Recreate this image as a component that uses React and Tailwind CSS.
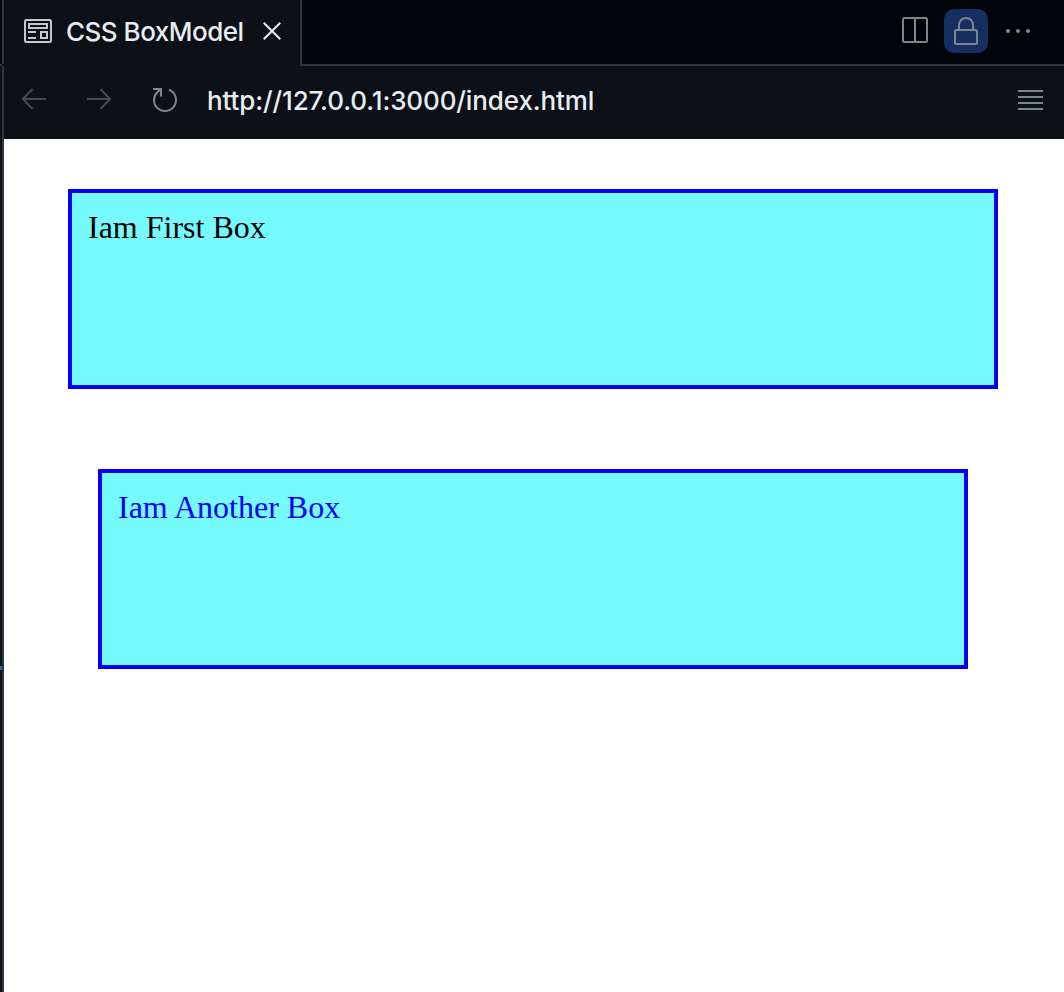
function PreviewIcon() {
  return (
    <svg className="h-6 w-7 shrink-0" viewBox="0 0 28 24" fill="none" stroke="#c5c9c8" strokeWidth="2">
      <rect x="1" y="1" width="26" height="22" rx="1.5" />
      <rect x="5" y="5" width="18" height="4" />
      <path d="M4 13h8M4 19h8" />
      <rect x="17" y="13" width="6" height="6" />
    </svg>
  );
}

function CloseIcon() {
  return (
    <svg className="h-[18px] w-[18px]" viewBox="0 0 18 18" fill="none" stroke="#e6edf3" strokeWidth="2">
      <path d="M.7.7l16.6 16.6M17.3.7L.7 17.3" />
    </svg>
  );
}

function ArrowIcon({ className }) {
  return (
    <svg className={className} viewBox="0 0 25 22" fill="none" stroke="#454b53" strokeWidth="2">
      <path d="M2 11H25M11.5 1L2 11l9.5 10" />
    </svg>
  );
}

function ReloadIcon() {
  return (
    <svg className="h-[26px] w-[26px]" viewBox="0 0 26 26" fill="none" stroke="#7d8590" strokeWidth="2">
      <path d="M17 2.8A11 11 0 1 1 5.3 5.2L8.2 2.6" />
      <path d="M1 2h8v7.5" />
    </svg>
  );
}

function SplitIcon() {
  return (
    <svg className="h-[26px] w-[26px]" viewBox="0 0 26 26" fill="none" stroke="#7d8590" strokeWidth="2">
      <rect x="1" y="1" width="24" height="24" rx="1.5" />
      <path d="M13 1v24" />
    </svg>
  );
}

function LockIcon() {
  return (
    <svg className="h-7 w-6" viewBox="0 0 24 28" fill="none" stroke="#7d8590" strokeWidth="2">
      <rect x="1" y="13" width="22" height="14" rx="1.5" />
      <path d="M5 13V8a7 7 0 0 1 14 0v5" />
    </svg>
  );
}

function MoreIcon() {
  return (
    <svg className="h-1 w-6" viewBox="0 0 24 4" fill="#7d8590">
      <circle cx="2" cy="2" r="2" />
      <circle cx="12" cy="2" r="2" />
      <circle cx="22" cy="2" r="2" />
    </svg>
  );
}

function MenuIcon() {
  return (
    <svg className="h-5 w-[25px]" viewBox="0 0 25 20" fill="none" stroke="#7d8590" strokeWidth="2">
      <path d="M0 1h25M0 7h25M0 13h25M0 19h25" />
    </svg>
  );
}

export default function App() {
  return (
    <div className="flex h-[992px] w-[1064px] overflow-hidden bg-white font-['Inter',sans-serif]">
      <div className="flex w-1 shrink-0 flex-col">
        <div className="flex h-16 bg-[#010409]">
          <div className="ml-auto w-0.5 bg-[#30363d]" />
        </div>
        <div className="flex h-0.5 bg-[#010409]">
          <div className="w-0.5 bg-[#30363d]" />
        </div>
        <div className="flex flex-1 bg-[#0d1117]">
          <div className="mt-[600px] h-1 w-0.5 bg-[#3a62b0]" />
          <div className="w-0.5 bg-[#30363d]" />
        </div>
      </div>
      <div className="flex min-w-0 flex-1 flex-col">
        <header className="flex h-[66px] bg-[#010409]">
          <div className="flex w-[298px] shrink-0 flex-col bg-[#0d1117]">
            <div className="flex h-16 items-center border-r-2 border-[#30363d] pb-0.5 pl-5">
              <PreviewIcon />
              <span className="ml-3.5 mt-0.5 w-[197px] whitespace-nowrap text-[26px] font-[450] leading-8 tracking-[-0.5px] text-[#e6edf3]">CSS BoxModel</span>
              <CloseIcon />
            </div>
            <div className="ml-auto h-0.5 w-0.5 bg-[#30363d]" />
          </div>
          <div className="flex flex-1 items-start border-b-2 border-[#30363d] pr-[34px]">
            <div className="ml-auto mt-[17px]"><SplitIcon /></div>
            <div className="ml-4 mt-[9px] flex h-11 w-11 items-center justify-center rounded-[10px] bg-[#172e61]">
              <LockIcon />
            </div>
            <div className="ml-[18px] mt-[29px] flex"><MoreIcon /></div>
          </div>
        </header>
        <nav className="flex h-[73px] shrink-0 items-center bg-[#0d1117] pb-[5px] pl-[17px] pr-[21px]">
          <ArrowIcon className="mb-0.5 h-[22px] w-[25px] shrink-0" />
          <ArrowIcon className="mb-0.5 ml-[41px] h-[22px] w-[25px] shrink-0 rotate-180" />
          <div className="ml-10"><ReloadIcon /></div>
          <span className="ml-[29px] mt-0.5 whitespace-nowrap text-[26px] font-[450] leading-8 tracking-[-0.11px] text-[#e6edf3]">http://127.0.0.1:3000/index.html</span>
          <div className="ml-auto"><MenuIcon /></div>
        </nav>
        <main className="flex flex-1 flex-col px-16 pt-[50px] font-['Liberation_Serif',serif] text-[32px] leading-9">
          <div className="mr-0.5 h-[200px] border-4 border-[#0000f5] bg-[#75fbfd] p-4 text-black">Iam First Box</div>
          <div className="ml-[30px] mr-8 mt-20 h-[200px] border-4 border-[#0000f5] bg-[#75fbfd] p-4 text-[#0000f5]">Iam Another Box</div>
        </main>
      </div>
    </div>
  );
}
